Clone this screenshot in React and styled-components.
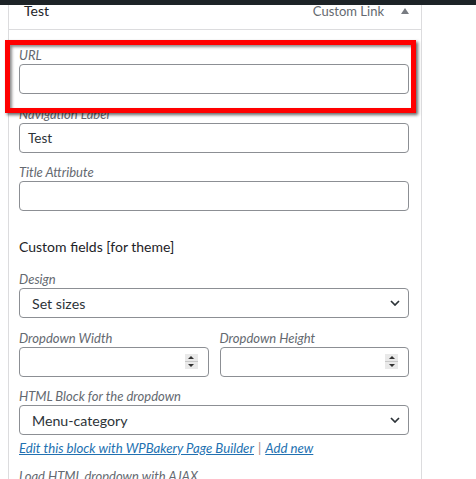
import React from "react";
import styled, { createGlobalStyle } from "styled-components";

const Global = createGlobalStyle`
  html, body { margin: 0; padding: 0; background: #fff; }
  body {
    font-family: Lato, "Noto Sans", Arial, sans-serif;
    color: #1d2327;
    overflow: hidden;
  }
`;

const Page = styled.div`
  position: relative;
  width: 476px;
  height: 479px;
  overflow: hidden;
  background: #fff;
`;

const TopBar = styled.div`
  height: 5px;
  background: #1d2327;
`;

const Panel = styled.div`
  margin-left: 8px;
  width: 412px;
  border: 1px solid #dcdcde;
  border-top: none;
  background: #fff;
`;

const Header = styled.div`
  height: 24px;
  border-bottom: 1px solid #dcdcde;
  display: flex;
  align-items: flex-start;
  padding: 0 12px 0 15px;
  background: #fff;
`;

const Title = styled.span`
  font-size: 14px;
  line-height: 12px;
  color: #1d2327;
  flex: 1;
`;

const ItemType = styled.span`
  font-size: 13px;
  line-height: 12px;
  color: #646970;
  margin-right: 17px;
`;

const Toggle = styled.span`
  display: block;
  width: 0;
  height: 0;
  margin-top: 3px;
  border-left: 4px solid transparent;
  border-right: 4px solid transparent;
  border-bottom: 6px solid #787c82;
`;

const Body = styled.div`
  padding: 17px 12px 20px 10px;
  display: flex;
  flex-direction: column;
`;

const Field = styled.div`
  display: flex;
  flex-direction: column;
  margin-bottom: ${(p) => p.$gap ?? 11.5}px;
  min-width: 0;
`;

const Label = styled.label`
  font-size: 13px;
  line-height: 17px;
  font-style: italic;
  color: #646970;
  white-space: nowrap;
`;

const TextBox = styled.div`
  box-sizing: border-box;
  height: 30px;
  border: 1px solid #8c8f94;
  border-radius: 4px;
  background: #fff;
  display: flex;
  align-items: center;
  padding: 0 8px;
  font-size: 13.5px;
  color: #2c3338;
`;

const SelectBox = styled(TextBox)`
  padding: 0 8px 0 12px;
  font-size: 14.2px;
  justify-content: space-between;
`;

const NumberBox = styled(TextBox)`
  justify-content: flex-end;
  padding: 0 10px 0 8px;
`;

const Spinner = styled.span`
  display: flex;
  flex-direction: column;
  width: 13px;
  height: 15px;
  background: #e9e9e9;
`;

const SpinHalf = styled.span`
  flex: 1;
  display: flex;
  align-items: center;
  justify-content: center;
  border-top: ${(p) => (p.$down ? "1px solid #c8c8c8" : "none")};
`;

const Arrow = styled.span`
  width: 0;
  height: 0;
  border-left: 3px solid transparent;
  border-right: 3px solid transparent;
  ${(p) =>
    p.$down
      ? "border-top: 3px solid #333;"
      : "border-bottom: 3px solid #333;"}
`;

const Heading = styled.h3`
  margin: 26px 0 14px;
  font-size: 14px;
  line-height: 20px;
  font-weight: 400;
  color: #1d2327;
`;

const Row = styled.div`
  display: grid;
  grid-template-columns: 1fr 1fr;
  column-gap: 11px;
`;

const Links = styled.div`
  margin: 5px 0 12px;
  font-size: 13.2px;
  line-height: 16px;
  font-style: italic;
  color: #646970;
`;

const Link = styled.a`
  color: #2271b1;
  text-decoration: underline;
`;

const Sep = styled.span`
  color: #b08a8a;
  margin: 0 4px;
  font-style: normal;
`;

const Callout = styled.div`
  position: absolute;
  left: 5px;
  top: 40px;
  width: 411px;
  height: 73px;
  box-sizing: border-box;
  border: 5px solid #ff0000;
  box-shadow: 2px 2px 3px rgba(0, 0, 0, 0.6),
    inset 2px 2px 3px rgba(0, 0, 0, 0.45);
  pointer-events: none;
`;

const Chevron = () => (
  <svg width="10" height="6" viewBox="0 0 10 6" aria-hidden="true">
    <path d="M1 1l4 4 4-4" fill="none" stroke="#2c3338" strokeWidth="1.7" />
  </svg>
);

const NumberInput = () => (
  <NumberBox>
    <Spinner>
      <SpinHalf>
        <Arrow />
      </SpinHalf>
      <SpinHalf $down>
        <Arrow $down />
      </SpinHalf>
    </Spinner>
  </NumberBox>
);

export default function App() {
  return (
    <Page>
      <Global />
      <TopBar />
      <Panel>
        <Header>
          <Title>Test</Title>
          <ItemType>Custom Link</ItemType>
          <Toggle />
        </Header>
        <Body>
          <Field>
            <Label>URL</Label>
            <TextBox />
          </Field>
          <Field>
            <Label>Navigation Label</Label>
            <TextBox>Test</TextBox>
          </Field>
          <Field $gap={0}>
            <Label>Title Attribute</Label>
            <TextBox />
          </Field>
          <Heading>Custom fields [for theme]</Heading>
          <Field>
            <Label>Design</Label>
            <SelectBox>
              Set sizes
              <Chevron />
            </SelectBox>
          </Field>
          <Row>
            <Field>
              <Label>Dropdown Width</Label>
              <NumberInput />
            </Field>
            <Field>
              <Label>Dropdown Height</Label>
              <NumberInput />
            </Field>
          </Row>
          <Field $gap={0}>
            <Label>HTML Block for the dropdown</Label>
            <SelectBox>
              Menu-category
              <Chevron />
            </SelectBox>
          </Field>
          <Links>
            <Link href="#">Edit this block with WPBakery Page Builder</Link>
            <Sep>|</Sep>
            <Link href="#">Add new</Link>
          </Links>
          <Field>
            <Label>Load HTML dropdown with AJAX</Label>
          </Field>
        </Body>
      </Panel>
      <Callout />
    </Page>
  );
}
